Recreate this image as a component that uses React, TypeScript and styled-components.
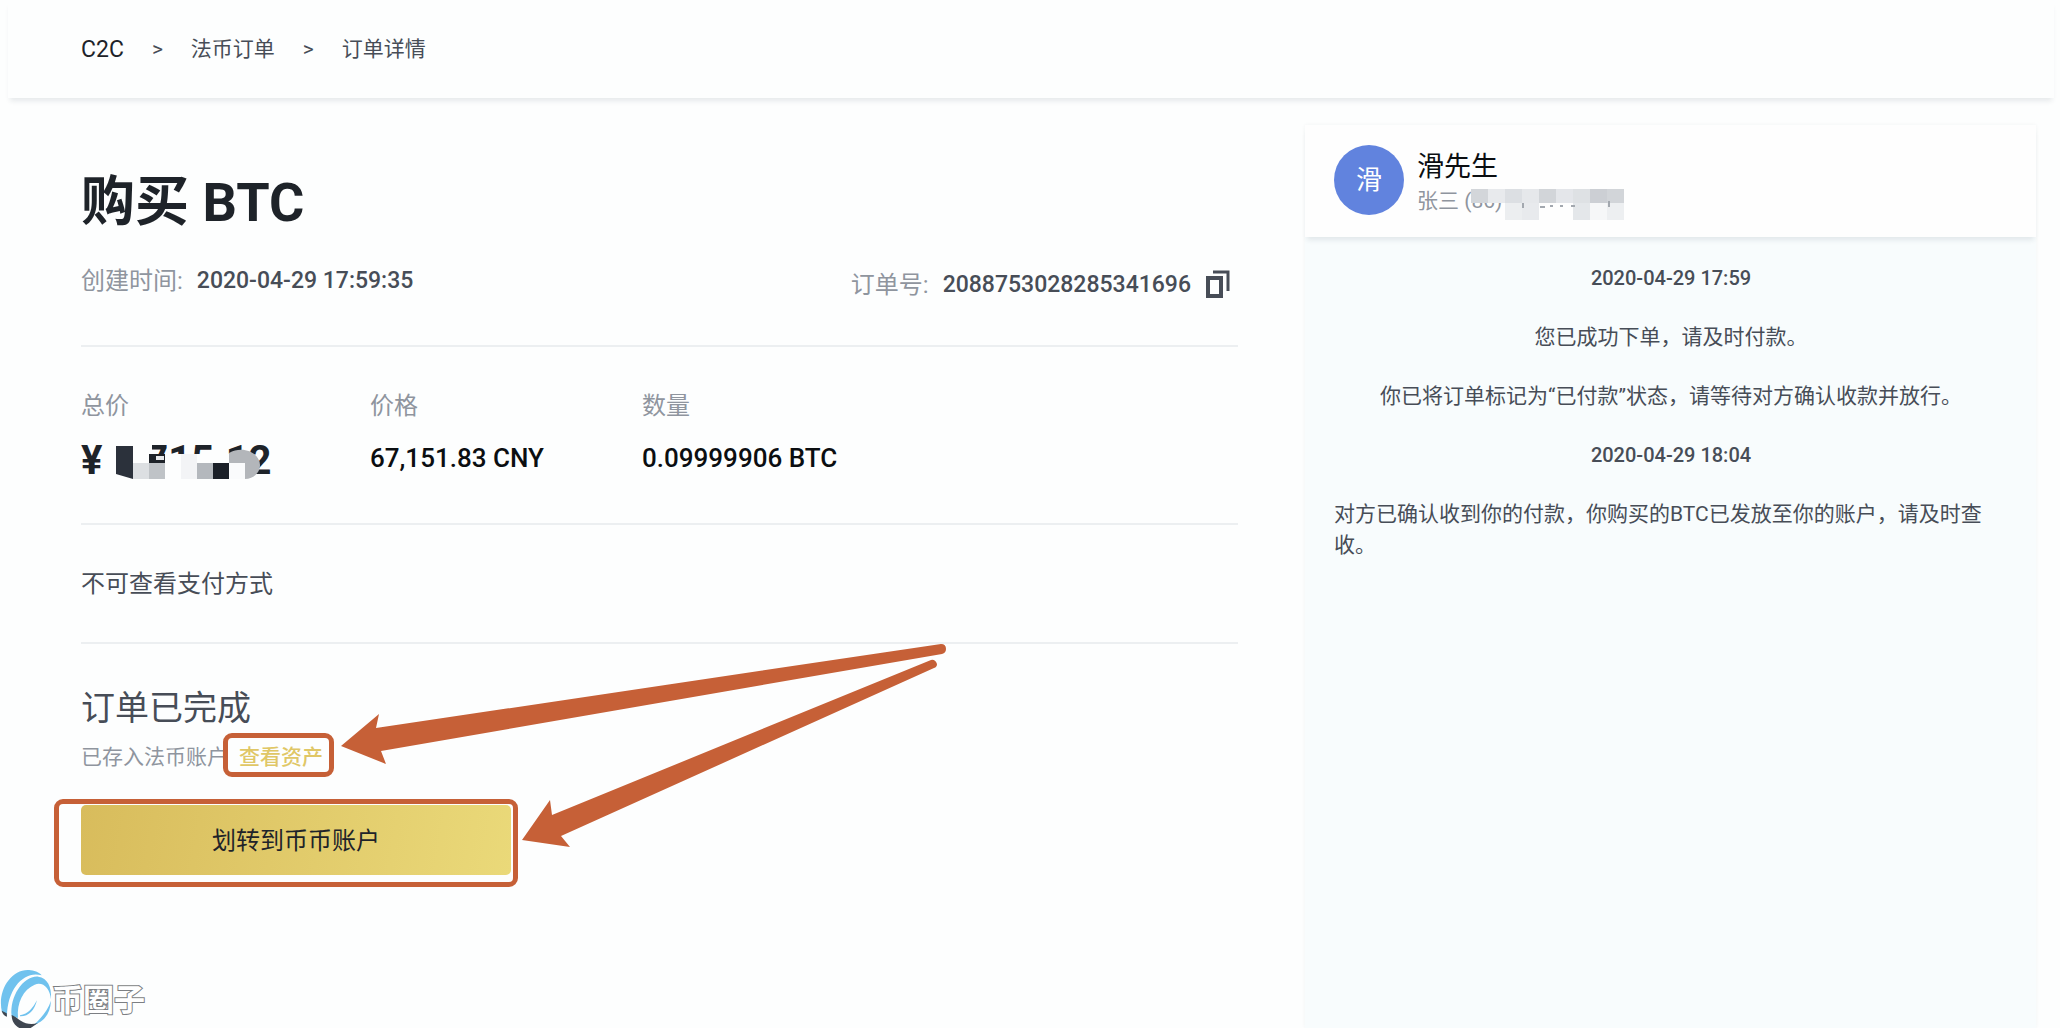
import React from "react";
import styled, { createGlobalStyle } from "styled-components";

const ACCENT = "#c66037";
const INK = "#1e2329";
const BODY = "#474d57";
const MUTED = "#8f959e";
const LINE = "#eceff1";

const GlobalStyle = createGlobalStyle`
  * { box-sizing: border-box; }
  body {
    margin: 0;
    background: #fdfefe;
    color: ${BODY};
    font-family: Roboto, "Noto Sans CJK SC", sans-serif;
    font-size: 21px;
    line-height: 31px;
  }
  h1, h2, p, dl, dd, ol { margin: 0; padding: 0; font-weight: 400; }
  button { font-family: inherit; cursor: pointer; }
`;

const Page = styled.div`
  position: relative;
  display: flex;
  flex-direction: column;
  min-height: 100vh;
  overflow: hidden;
`;

const TopBar = styled.nav`
  margin: 0 6px 0 8px;
  padding: 34px 73px 33px;
  box-shadow: 0 5px 5px -2px rgba(30, 50, 70, 0.1);
`;

const Crumbs = styled.ol`
  display: flex;
  gap: 28px;
  list-style: none;
`;

const Crumb = styled.li`
  display: flex;
  gap: 28px;
  & + &::before { content: ">"; }
`;

const CrumbLink = styled.a<{ $strong?: boolean }>`
  color: ${(p) => (p.$strong ? INK : BODY)};
  font-size: ${(p) => (p.$strong ? 23 : 21)}px;
  text-decoration: none;
`;

const Columns = styled.main`
  position: relative;
  flex: 1;
  display: grid;
  grid-template-columns: minmax(0, 1157fr) minmax(0, 731fr);
  gap: 67px;
  padding: 27px 24px 0 81px;
`;

const Order = styled.section`
  padding-top: 38px;
`;

const Title = styled.h1`
  color: ${INK};
  font-size: 54px;
  font-weight: 700;
  line-height: 80px;
`;

const Block = styled.div<{ $top: number; $bottom: number }>`
  padding: ${(p) => p.$top}px 0 ${(p) => p.$bottom}px;
  border-bottom: 2px solid ${LINE};
`;

const MetaRow = styled(Block)`
  display: flex;
  justify-content: space-between;
  font-size: 24px;
  line-height: 36px;
`;

const Meta = styled.div<{ $drop?: boolean }>`
  display: flex;
  align-items: center;
  gap: 14px;
  padding: ${(p) => (p.$drop ? "4px 8px 0 0" : "0 0 4px")};
`;

const Label = styled.span`
  color: ${MUTED};
`;

const MetaValue = styled.span`
  font-size: 23px;
  font-weight: 500;
`;

const IconButton = styled.button`
  display: flex;
  padding: 0;
  border: 0;
  background: none;
  color: ${BODY};
`;

const Figures = styled.dl`
  display: grid;
  grid-template-columns: 289fr 272fr 596fr;
`;

const FigureName = styled.dt`
  color: ${MUTED};
  font-size: 24px;
  line-height: 36px;
`;

const FigureValue = styled.dd<{ $total?: boolean }>`
  position: relative;
  margin-top: 10px;
  color: ${(p) => (p.$total ? INK : "#0b0e11")};
  font-size: ${(p) => (p.$total ? 40 : 26)}px;
  font-weight: ${(p) => (p.$total ? 700 : 500)};
  line-height: ${(p) => (p.$total ? 54 : 48)}px;
`;

const TotalMask = styled.svg`
  position: absolute;
  left: 32px;
  top: 0;
`;

const Note = styled.p`
  font-size: 24px;
  line-height: 36px;
`;

const Done = styled.h2`
  margin-top: 39px;
  font-size: 34px;
  line-height: 50px;
`;

const Deposit = styled.p`
  margin-top: 9px;
  color: ${MUTED};
  font-size: 21px;
`;

const Marked = styled.span<{ $inset: string }>`
  position: relative;
  display: inline-block;
  &::after {
    content: "";
    position: absolute;
    inset: ${(p) => p.$inset};
    border: 5px solid ${ACCENT};
    border-radius: 9px;
    pointer-events: none;
  }
`;

const AssetLink = styled.a`
  margin-left: 11px;
  color: #e0c766;
  font-weight: 500;
  text-decoration: none;
`;

const Transfer = styled.button`
  display: block;
  width: 430px;
  height: 70px;
  margin-top: 32px;
  padding: 0 0 4px;
  border: 0;
  border-radius: 5px;
  background: linear-gradient(100deg, #d8bc5c, #ead979);
  color: ${INK};
  font-size: 24px;
`;

const Arrows = styled.svg`
  position: absolute;
  left: 340px;
  top: 542px;
  pointer-events: none;
`;

const Chat = styled.aside`
  display: flex;
  flex-direction: column;
  background: #f8fcfd;
  box-shadow: 0 0 4px rgba(40, 60, 80, 0.05);
`;

const Peer = styled.header`
  display: flex;
  align-items: center;
  gap: 13px;
  padding: 18px 29px 20px;
  background: #fefefe;
  box-shadow: 0 5px 5px -2px rgba(30, 50, 70, 0.1);
`;

const Avatar = styled.span`
  display: grid;
  place-items: center;
  width: 70px;
  height: 70px;
  border-radius: 50%;
  background: #6183de;
  color: #fff;
  font-size: 26px;
`;

const PeerText = styled.div`
  padding-top: 6px;
`;

const PeerName = styled.p`
  color: #0b0e11;
  font-size: 27px;
  line-height: 37px;
`;

const PeerReal = styled.p`
  position: relative;
  color: ${MUTED};
`;

const PeerMask = styled.svg`
  position: absolute;
  left: 54px;
  top: 0;
`;

const Messages = styled.div`
  display: flex;
  flex-direction: column;
  gap: 28px;
  padding: 26px 28px 0 29px;
`;

const Message = styled.p<{ $left?: boolean }>`
  text-align: ${(p) => (p.$left ? "left" : "center")};
`;

const Stamp = styled.time`
  text-align: center;
  font-size: 20px;
  font-weight: 500;
`;

const Watermark = styled.div`
  position: absolute;
  left: 0;
  bottom: 0;
  display: flex;
  align-items: center;
`;

const WatermarkText = styled.span`
  padding-top: 6px;
  color: #fff;
  font-size: 31px;
  font-weight: 700;
  -webkit-text-stroke: 2px #7c7f83;
  paint-order: stroke fill;
`;

function CopyIcon() {
  return (
    <svg width="25" height="30" viewBox="0 0 25 30" fill="none" stroke="currentColor" aria-hidden="true">
      <path d="M3 8h13v18H3z" strokeWidth="4" />
      <path d="M8 2h15v19" strokeWidth="3" />
    </svg>
  );
}

function CoinLogo() {
  return (
    <svg width="52" height="62" viewBox="0 0 156 186" aria-hidden="true">
      <path d="M6 138C-10 75 35 5 92 13 108 15 121 22 125 28 75 12 22 65 21 150Z" fill="#70c2ee" />
      <path d="M35 150C28 90 72 28 115 32 142 36 156 62 153 100 150 66 128 46 104 56 70 70 50 110 54 156Z" fill="#70c2ee" />
      <path d="M153 104C151 142 134 166 100 178 120 160 142 136 153 104Z" fill="#70c2ee" />
      <path d="M60 148C85 144 98 126 111 103 103 134 86 152 60 151Z" fill="#70c2ee" />
      <path d="M5 134 20 142 21 152C13 150 8 144 5 134Z" fill="#3f4650" />
      <path d="M35 147C52 152 72 184 114 171L92 186H58C43 178 35 164 35 147Z" fill="#3f4650" />
    </svg>
  );
}

const maskTiles = [
  ["#d3d6da", "#e8eaed", "#dcdfe3", "#e6e8eb", "#d2d5d9", "#e4e6ea", "#dee1e4", "#cccfd4", "#d2d5d9"],
  ["", "", "#eceef0", "#e8eaed", "", "", "#e4e7ea", "#f6f7f8", "#edeff1"],
];

export default function App() {
  return (
    <Page>
      <GlobalStyle />
      <TopBar>
        <Crumbs>
          <Crumb><CrumbLink href="#c2c" $strong>C2C</CrumbLink></Crumb>
          <Crumb><CrumbLink href="#orders">法币订单</CrumbLink></Crumb>
          <Crumb><CrumbLink href="#detail">订单详情</CrumbLink></Crumb>
        </Crumbs>
      </TopBar>
      <Columns>
        <Order>
          <Title>购买 BTC</Title>
          <MetaRow $top={20} $bottom={42}>
            <Meta>
              <Label>创建时间:</Label>
              <MetaValue>2020-04-29 17:59:35</MetaValue>
            </Meta>
            <Meta $drop>
              <Label>订单号:</Label>
              <MetaValue>2088753028285341696</MetaValue>
              <IconButton type="button" aria-label="复制"><CopyIcon /></IconButton>
            </Meta>
          </MetaRow>
          <Block $top={41} $bottom={35}>
            <Figures>
              <div>
                <FigureName>总价</FigureName>
                <FigureValue $total>
                  ¥ 6,715.12
                  <TotalMask width="150" height="50" viewBox="0 0 150 50" aria-hidden="true">
                    <path d="M0 0h39v50H0zM39 20h93v30H39z" fill="#fdfefe" />
                    <path d="M3 12h17v33L3 40z" fill="#2b313b" />
                    <path d="M36 20h16v9H36z" fill="#1e2329" />
                    <path d="M43 22h8v4h-8z" fill="#e8eaec" />
                    <path d="M20 29h16v16H20z" fill="#dcdfe2" />
                    <path d="M36 29h16v16H36z" fill="#bfc3c7" />
                    <path d="M68 20h16v25H68z" fill="#f3f4f6" />
                    <path d="M84 29h16v16H84z" fill="#b4b8bd" />
                    <path d="M100 29h16v16h-16z" fill="#1b2028" />
                    <path d="M116 29h16v16h-16z" fill="#fafbfc" />
                    <path d="M116 19C130 11 147 19 147 31 147 39 140 45 132 45V29H116Z" fill="#b3b6ba" />
                  </TotalMask>
                </FigureValue>
              </div>
              <div>
                <FigureName>价格</FigureName>
                <FigureValue>67,151.83 CNY</FigureValue>
              </div>
              <div>
                <FigureName>数量</FigureName>
                <FigureValue>0.09999906 BTC</FigureValue>
              </div>
            </Figures>
          </Block>
          <Block $top={41} $bottom={40}>
            <Note>不可查看支付方式</Note>
          </Block>
          <Done>订单已完成</Done>
          <Deposit>
            已存入法币账户
            <Marked $inset="-9px -11px -4px -5px">
              <AssetLink href="#assets">查看资产</AssetLink>
            </Marked>
          </Deposit>
          <Marked $inset="26px -7px -12px -27px">
            <Transfer type="button">划转到币币账户</Transfer>
          </Marked>
        </Order>
        <Chat>
          <Peer>
            <Avatar>滑</Avatar>
            <PeerText>
              <PeerName>滑先生</PeerName>
              <PeerReal>
                张三 (86)
                <PeerMask width="156" height="34" viewBox="0 0 156 34" aria-hidden="true">
                  {maskTiles.map((row, r) =>
                    row.map((fill, c) =>
                      fill ? (
                        <rect key={`${r}-${c}`} x={c * 17} y={r ? 17 : 3} width="17" height={r ? 17 : 14} fill={fill} />
                      ) : null,
                    ),
                  )}
                  <path d="M52 17v5M69 21h5M79 20h3M89 20h3M100 20h4M138 15v6" stroke="#a3a8af" strokeWidth="2" />
                </PeerMask>
              </PeerReal>
            </PeerText>
          </Peer>
          <Messages>
            <Stamp>2020-04-29 17:59</Stamp>
            <Message>您已成功下单，请及时付款。</Message>
            <Message>你已将订单标记为“已付款”状态，请等待对方确认收款并放行。</Message>
            <Stamp>2020-04-29 18:04</Stamp>
            <Message $left>对方已确认收到你的付款，你购买的BTC已发放至你的账户，请及时查收。</Message>
          </Messages>
        </Chat>
        <Arrows width="610" height="220" viewBox="340 640 610 220" fill={ACCENT} aria-hidden="true">
          <path d="M341 746 379 714 376 728 941 644Q946 644 946 649 946 653 942 654L381 751 386 764Z" />
          <path d="M522 840 550 800 552 815 931 660Q935 659 937 664 937 667 934 668L561 836 570 847Z" />
        </Arrows>
      </Columns>
      <Watermark>
        <CoinLogo />
        <WatermarkText>币圈子</WatermarkText>
      </Watermark>
    </Page>
  );
}
